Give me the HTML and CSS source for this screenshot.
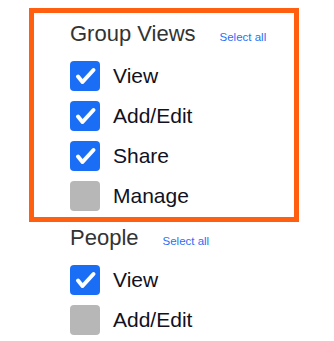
FILE: index.html
```html
<!DOCTYPE html>
<html lang="en">
<head>
    <meta charset="UTF-8">
    <meta name="viewport" content="width=device-width, initial-scale=1.0">
    <title>Permissions</title>
    <link rel="stylesheet" href="styles.css">
</head>
<body>
    <div class="highlight">
        <div class="perm-group">
            <div class="group-head">
                <h2>Group Views</h2>
                <a href="#" class="select-all">Select all</a>
            </div>
            <ul class="perm-list">
                <li><span class="box checked"><svg viewBox="0 0 30 30"><path d="M8 15.5 L12.5 21 L23.5 9"/></svg></span>View</li>
                <li><span class="box checked"><svg viewBox="0 0 30 30"><path d="M8 15.5 L12.5 21 L23.5 9"/></svg></span>Add/Edit</li>
                <li><span class="box checked"><svg viewBox="0 0 30 30"><path d="M8 15.5 L12.5 21 L23.5 9"/></svg></span>Share</li>
                <li><span class="box"></span>Manage</li>
            </ul>
        </div>
    </div>

    <div class="perm-group plain">
        <div class="group-head">
            <h2>People</h2>
            <a href="#" class="select-all">Select all</a>
        </div>
        <ul class="perm-list">
            <li><span class="box checked"><svg viewBox="0 0 30 30"><path d="M8 15.5 L12.5 21 L23.5 9"/></svg></span>View</li>
            <li><span class="box"></span>Add/Edit</li>
        </ul>
    </div>
</body>
</html>
```

FILE: styles.css
```css
* {
    box-sizing: border-box;
    margin: 0;
    padding: 0;
}

body {
    font-family: "Liberation Sans", Arial, sans-serif;
    background-color: white;
    padding: 8px 0 0 29px;
}

.highlight {
    width: 270px;
    border: 5px solid #ff5f0f;
    padding: 8px 0 6px 36px;
}

.plain {
    padding: 3px 0 0 41px;
}

.group-head {
    display: flex;
    align-items: baseline;
    margin-bottom: 15px;
}

.group-head h2 {
    font-size: 22px;
    font-weight: normal;
    line-height: 25px;
    color: #333;
}

.select-all {
    margin-left: 24px;
    font-size: 11.5px;
    color: #2a6ff6;
    text-decoration: none;
}

.perm-list {
    list-style: none;
    display: flex;
    flex-direction: column;
    gap: 10px;
}

.perm-list li {
    display: flex;
    align-items: center;
    height: 30px;
    font-size: 21px;
    color: #111122;
}

.box {
    width: 30px;
    height: 30px;
    margin-right: 13px;
    border-radius: 4px;
    background-color: #b7b7b7;
}

.box.checked {
    background-color: #1a6ef6;
}

.box svg {
    display: block;
    width: 30px;
    height: 30px;
}

.box svg path {
    fill: none;
    stroke: white;
    stroke-width: 4;
    stroke-linecap: round;
    stroke-linejoin: round;
}
```
